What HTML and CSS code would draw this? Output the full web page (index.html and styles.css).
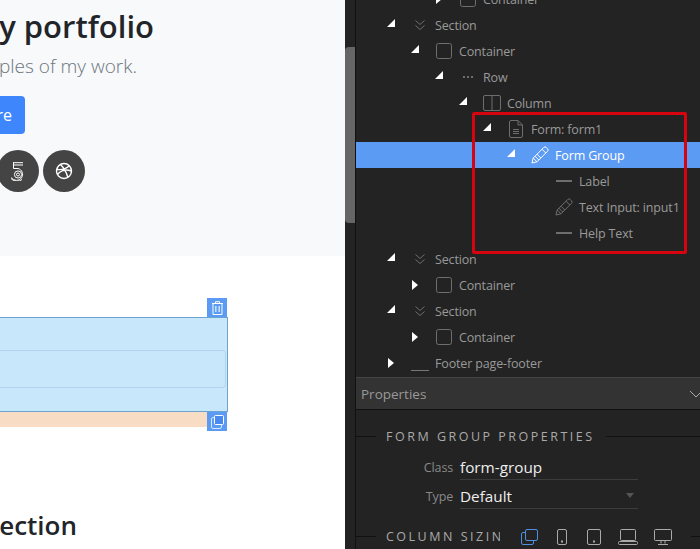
FILE: index.html
```html
<!DOCTYPE html>
<html lang="en">
<head>
<meta charset="UTF-8" />
<title>Page Builder</title>
<link rel="stylesheet" href="styles.css">
</head>
<body>
  <svg class="sprites" aria-hidden="true">
    <symbol id="i-section" viewBox="0 0 12 12"><path d="M1.5 1.5 6 5.5l4.500-4M1.500 6.500 6 10.500l4.500-4" fill="none" stroke="currentColor"/></symbol>
    <symbol id="i-box" viewBox="0 0 16 16"><rect x=".5" y=".5" width="15" height="15" rx="2" fill="none" stroke="currentColor"/></symbol>
    <symbol id="i-dots" viewBox="0 0 12 4"><path d="M1 1h2v2H1zM5 1h2v2H5zM9 1h2v2H9z" fill="currentColor"/></symbol>
    <symbol id="i-column" viewBox="0 0 18 16"><rect x=".5" y=".5" width="17" height="15" rx="1.500" fill="none" stroke="currentColor"/><path d="M9 .5v15" stroke="currentColor"/></symbol>
    <symbol id="i-doc" viewBox="0 0 14 18"><path d="M.5 2A1.500 1.500 0 0 1 2 .5h7L13.500 5v11a1.500 1.500 0 0 1-1.500 1.500H2A1.500 1.500 0 0 1 .5 16zM9 .5V5h4.500M4 9.500h6M4 11.500h6M4 13.500h6" fill="none" stroke="currentColor"/></symbol>
    <symbol id="i-pencil" viewBox="0 0 18 18"><path d="M1 17l1.200-5L12.800 1.400a1.600 1.600 0 0 1 2.300 0l1.500 1.500a1.600 1.600 0 0 1 0 2.300L6 15.800zM2.200 12 6 15.800M4 10.200 7.800 14M6 8.200 9.800 12M11 3.200 14.800 7" fill="none" stroke="currentColor"/></symbol>
  </svg>

  <main class="canvas">
    <section class="hero">
      <h1 class="hero-title">This is my portfolio</h1>
      <p class="hero-text">Here are some examples of my work.</p>
      <a class="hero-btn">Learn more</a>
      <div class="socials">
        <span class="social">
          <svg width="16" height="19" viewBox="0 0 16 19" fill="none" stroke="#fff"><path d="M3 .7h10M3 3h10M3.500 .7v5.800"/><path d="M3.500 6.500h4.500a6 6 0 1 1-6.500 9"/><circle cx="8" cy="12.500" r="3.600"/><circle cx="8" cy="12.500" r="1.500"/><path d="M1 16.500a8 8 0 0 0 11 1"/></svg>
        </span>
        <span class="social">
          <svg width="18" height="18" viewBox="0 0 18 18" fill="none" stroke="#fff" stroke-width="1.400"><circle cx="9" cy="9" r="7.500"/><path d="M5.500 2.500c3 3 6 7.500 7.300 13M2 7.500c4.500 .5 9-.5 12.500-4M2.500 12.500c2-3 7-6 14-3.500"/></svg>
        </span>
      </div>
    </section>

    <section class="form-area">
      <div class="selected-box">
        <div class="selected-input"></div>
        <span class="handle handle-top">
          <svg width="11" height="14" viewBox="0 0 11 14" fill="none" stroke="#fff"><path d="M0 2.500h11M3.500 2.500V.7h4v1.800M1 2.500v11h9v-11"/><path d="M3.800 5v6M7.200 5v6" stroke="#c9e7fb" stroke-width="1.500"/></svg>
        </span>
        <span class="handle handle-bottom">
          <svg width="13" height="14" viewBox="0 0 13 14" fill="none" stroke="#fff"><rect x="3.500" y=".5" width="9" height="9" rx="1" fill="#4a8af0"/><path d="M3.500 2.500H2A1.500 1.500 0 0 0 .5 4v8A1.500 1.500 0 0 0 2 13.500h7a1.500 1.500 0 0 0 1.500-1.500V9.500" stroke="#d6e8ff"/></svg>
        </span>
      </div>
      <div class="margin-strip"></div>
    </section>

    <h2 class="next-title">New section</h2>
  </main>

  <div class="scrollbar"><div class="scroll-thumb"></div></div>

  <aside class="panel">
    <div class="tree">
      <div class="row lvl-2"><i class="arrow closed"></i><span class="ico"><svg width="16" height="16"><use href="#i-box"/></svg></span><span>Container</span></div>
      <div class="row lvl-0"><i class="arrow open"></i><span class="ico"><svg width="12" height="12"><use href="#i-section"/></svg></span><span>Section</span></div>
      <div class="row lvl-1"><i class="arrow open"></i><span class="ico"><svg width="16" height="16"><use href="#i-box"/></svg></span><span>Container</span></div>
      <div class="row lvl-2"><i class="arrow open"></i><span class="ico"><svg width="12" height="4"><use href="#i-dots"/></svg></span><span>Row</span></div>
      <div class="row lvl-3"><i class="arrow open"></i><span class="ico"><svg width="18" height="16"><use href="#i-column"/></svg></span><span>Column</span></div>
      <div class="row lvl-4"><i class="arrow open"></i><span class="ico"><svg width="14" height="18"><use href="#i-doc"/></svg></span><span>Form: form1</span></div>
      <div class="row lvl-5 active"><i class="arrow open"></i><span class="ico"><svg width="18" height="18"><use href="#i-pencil"/></svg></span><span>Form Group</span></div>
      <div class="row lvl-6"><i class="arrow"></i><span class="ico"><i class="dash"></i></span><span>Label</span></div>
      <div class="row lvl-6"><i class="arrow"></i><span class="ico"><svg width="18" height="18"><use href="#i-pencil"/></svg></span><span>Text Input: input1</span></div>
      <div class="row lvl-6"><i class="arrow"></i><span class="ico"><i class="dash"></i></span><span>Help Text</span></div>
      <div class="row lvl-0"><i class="arrow open"></i><span class="ico"><svg width="12" height="12"><use href="#i-section"/></svg></span><span>Section</span></div>
      <div class="row lvl-1"><i class="arrow closed"></i><span class="ico"><svg width="16" height="16"><use href="#i-box"/></svg></span><span>Container</span></div>
      <div class="row lvl-0"><i class="arrow open"></i><span class="ico"><svg width="12" height="12"><use href="#i-section"/></svg></span><span>Section</span></div>
      <div class="row lvl-1"><i class="arrow closed"></i><span class="ico"><svg width="16" height="16"><use href="#i-box"/></svg></span><span>Container</span></div>
      <div class="row lvl-0"><i class="arrow closed"></i><span class="ico"><i class="underscore"></i></span><span>Footer page-footer</span></div>
    </div>

    <div class="red-box"></div>

    <div class="props-bar">
      <span>Properties</span>
      <svg class="props-chevron" width="14" height="8" viewBox="0 0 14 8"><path d="M1 1l6 6 6-6" fill="none" stroke="#aaa"/></svg>
    </div>

    <div class="group-head"><span class="head-text">FORM GROUP PROPERTIES</span></div>
    <div class="field">
      <label class="field-label">Class</label>
      <div class="field-value">form-group</div>
    </div>
    <div class="field">
      <label class="field-label">Type</label>
      <div class="field-value">Default<i class="caret"></i></div>
    </div>

    <div class="group-head sizing-head">
      <span class="head-text clip">COLUMN SIZING</span>
      <div class="devices">
        <svg class="device-on" width="17" height="16" viewBox="0 0 17 16" fill="none" stroke="currentColor"><rect x="4.500" y=".5" width="12" height="11" rx="1.500"/><path d="M4.500 3.500H2A1.500 1.500 0 0 0 .5 5v9A1.500 1.500 0 0 0 2 15.500h9a1.500 1.500 0 0 0 1.500-1.500v-2.500"/></svg>
        <svg width="10" height="16" viewBox="0 0 10 16" fill="none" stroke="currentColor"><rect x=".5" y=".5" width="9" height="15" rx="1.500"/><path d="M4 12.500h2" stroke-width="2"/></svg>
        <svg width="14" height="16" viewBox="0 0 14 16" fill="none" stroke="currentColor"><rect x=".5" y=".5" width="13" height="15" rx="1.500"/><path d="M6 12.500h2" stroke-width="2"/></svg>
        <svg width="20" height="16" viewBox="0 0 20 16" fill="none" stroke="currentColor"><rect x="2.500" y=".5" width="15" height="11" rx="1"/><rect x=".5" y="12.500" width="19" height="3" rx="1"/></svg>
        <svg width="18" height="16" viewBox="0 0 18 16" fill="none" stroke="currentColor"><rect x=".5" y=".5" width="17" height="11" rx="1"/><path d="M7 11.500v3M11 11.500v3M4 15.500h10"/></svg>
      </div>
    </div>
  </aside>
</body>
</html>
```

FILE: styles.css
```css
* {
  box-sizing: border-box;
}

html,
body {
  height: 549px;
  overflow: hidden;
}

body {
  margin: 0;
  display: flex;
  font-family: "Open Sans", "Noto Sans", sans-serif;
  background: #232323;
}

.sprites {
  display: none;
}

/* Page canvas */
.canvas {
  width: 345px;
  flex: none;
  background: #fff;
  overflow: hidden;
}

.hero {
  height: 256px;
  background: #f8f9fa;
  display: flex;
  flex-direction: column;
  align-items: flex-end;
  overflow: hidden;
  color: #212529;
}

.hero > * {
  flex: none;
  white-space: nowrap;
}

.hero-title {
  margin: 5px 191px 0 0;
  font-size: 31px;
  line-height: 42px;
  font-weight: 600;
}

.hero-text {
  margin: 6px 208px 0 0;
  font-size: 19px;
  line-height: 26px;
  font-weight: 300;
  color: #6c757d;
}

.hero-btn {
  margin: 17px 320px 0 0;
  height: 38px;
  padding: 0 13px;
  border-radius: 4px;
  background: #3e86fb;
  color: #fff;
  font-size: 16px;
  line-height: 38px;
}

.socials {
  margin: 16px 260px 0 0;
  display: flex;
  gap: 4px;
}

.social {
  width: 42px;
  height: 42px;
  border-radius: 50%;
  background: #444;
  display: flex;
  align-items: center;
  justify-content: center;
}

.form-area {
  margin-top: 61px;
  width: 228px;
}

.selected-box {
  position: relative;
  height: 95px;
  background: #c9e7fb;
  border: 1px solid #6ba3d0;
  border-left: 0;
  padding: 32px 1px 0 0;
}

.selected-input {
  height: 38px;
  border: 1px solid #b2d3ee;
  border-left: 0;
  border-radius: 0 4px 4px 0;
}

.handle {
  position: absolute;
  right: 0;
  width: 20px;
  height: 19px;
  background: #5b9bf3;
  display: flex;
  align-items: center;
  justify-content: center;
}

.handle-top {
  top: -20px;
}

.handle-bottom {
  bottom: -20px;
}

.margin-strip {
  height: 15px;
  margin-right: 21px;
  background: #f8dcc3;
}

.next-title {
  margin: 80px 0 0;
  font-size: 26px;
  line-height: 36px;
  font-weight: 600;
  color: #212529;
  white-space: nowrap;
  text-align: right;
  width: 77px;
  direction: rtl;
}

/* Scrollbar between canvas and panel */
.scrollbar {
  width: 11px;
  flex: none;
  background: #232323;
  border-right: 1px solid #111;
  padding-top: 47px;
}

.scroll-thumb {
  width: 10px;
  height: 176px;
  background: #666;
  border-radius: 4px 0 0 4px;
}

/* Right panel */
.panel {
  position: relative;
  width: 344px;
  flex: none;
  overflow: hidden;
  color: #999;
  font-size: 12.5px;
  letter-spacing: -.15px;
}

.tree {
  margin-top: -14px;
  height: 377px;
  margin-bottom: 14px;
}

.row {
  height: 26px;
  display: flex;
  align-items: center;
  white-space: nowrap;
}

.lvl-0 { padding-left: 29px; }
.lvl-1 { padding-left: 53px; }
.lvl-2 { padding-left: 77px; }
.lvl-3 { padding-left: 101px; }
.lvl-4 { padding-left: 125px; }
.lvl-5 { padding-left: 149px; }
.lvl-6 { padding-left: 173px; }

.row.active {
  background: #5b9bf3;
  color: #fff;
}

.arrow {
  width: 12px;
  height: 12px;
  margin-right: 8px;
  flex: none;
  display: block;
}

.arrow.open {
  position: relative;
  top: -2px;
}

.arrow.open::before {
  content: "";
  display: block;
  margin: 2px;
  border-style: solid;
  border-width: 0 0 8px 8px;
  border-color: transparent transparent #fff transparent;
}

.arrow.closed::before {
  content: "";
  display: block;
  margin: .5px 3px;
  border-style: solid;
  border-width: 5.5px 0 5.5px 6px;
  border-color: transparent transparent transparent #fff;
}

.ico {
  width: 30px;
  flex: none;
  display: flex;
  align-items: center;
  justify-content: center;
  color: #6e6e6e;
}

.active .ico {
  color: #fff;
}

.dash {
  width: 16px;
  height: 2px;
  background: #6e6e6e;
}

.underscore {
  width: 18px;
  height: 1px;
  background: #777;
  margin-top: 14px;
}

.red-box {
  position: absolute;
  left: 116px;
  top: 112px;
  width: 215px;
  height: 142px;
  border: 3px solid #d5040f;
  border-radius: 2px;
}

.props-bar {
  height: 33px;
  padding-left: 5px;
  display: flex;
  align-items: center;
  justify-content: space-between;
  background: #333;
  border-top: 1px solid #444;
  border-bottom: 1px solid #111;
  font-size: 13.5px;
  letter-spacing: 0;
  color: #999;
}

.props-chevron {
  margin-right: -3px;
}

.group-head {
  display: flex;
  align-items: center;
  margin-top: 16px;
  height: 20px;
  color: #aaa;
  font-size: 12.5px;
  letter-spacing: 2.5px;
}

.group-head::before {
  content: "";
  width: 20px;
  height: 1px;
  margin-right: 10px;
  background: #111;
}

.group-head::after {
  content: "";
  flex: 1;
  height: 1px;
  margin-left: 11px;
  background: #111;
}

.head-text {
  white-space: nowrap;
}

.head-text.clip {
  width: 114px;
  overflow: hidden;
}

.sizing-head {
  margin-top: 17px;
}

.sizing-head::after {
  margin-left: 19px;
}

.devices {
  display: flex;
  align-items: center;
  margin-left: 21px;
  margin-top: 1px;
  color: #aaa;
}

.devices svg:nth-child(2) { margin-left: 19px; }
.devices svg:nth-child(3) { margin-left: 20px; }
.devices svg:nth-child(4) { margin-left: 17px; }
.devices svg:nth-child(5) { margin-left: 16px; }

.device-on {
  color: #4f8fe0;
}

.field {
  display: flex;
  align-items: flex-start;
  height: 29px;
}

.group-head + .field {
  margin-top: 5px;
}

.field-label {
  width: 97px;
  text-align: right;
  color: #888;
  font-size: 12.5px;
  line-height: 33px;
}

.field-value {
  position: relative;
  width: 178px;
  height: 29px;
  margin-left: 7px;
  border-bottom: 1px solid #3c3c3c;
  color: #eee;
  font-size: 15.3px;
  letter-spacing: 0;
  line-height: 33px;
}

.caret {
  position: absolute;
  right: 4px;
  top: 13px;
  border-style: solid;
  border-width: 5px 4px 0;
  border-color: #555 transparent transparent;
}
```
